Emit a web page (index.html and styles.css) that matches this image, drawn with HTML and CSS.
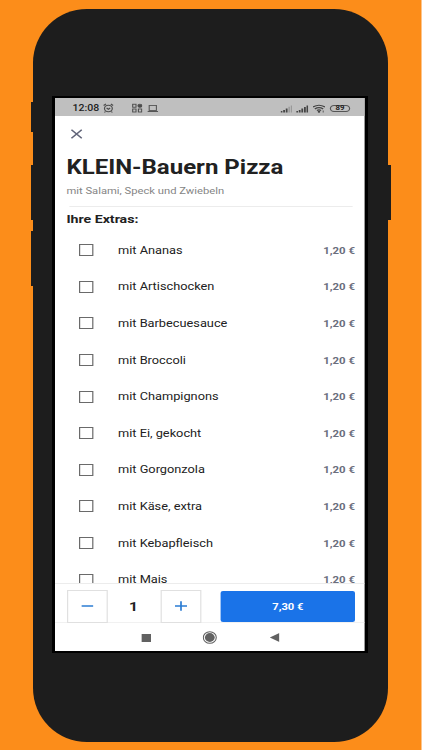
FILE: index.html
```
<!DOCTYPE html>
<html lang="de">
<head>
    <meta charset="UTF-8">
    <meta name="viewport" content="width=device-width, initial-scale=1.0">
    <title>KLEIN-Bauern Pizza</title>
    <link rel="stylesheet" href="styles.css">
</head>
<body>
    <div class="phone">
        <span class="side-key key-mute"></span>
        <span class="side-key key-up"></span>
        <span class="side-key key-down"></span>
        <span class="side-key key-power"></span>
        <div class="bezel">
            <div class="screen">
                <div class="status-bar">
                    <span class="clock">12:08</span>
                    <svg class="alarm" width="9" height="10" viewBox="0 0 18 20" fill="none" stroke="#4c4c4c" stroke-width="2">
                        <circle cx="9" cy="11" r="6.5"/>
                        <path d="M1 5l4-3M17 5l-4-3M6 10l3 2.500 3-2.500M4 17l-1.500 2M14 17l1.500 2"/>
                    </svg>
                    <svg class="apps" width="9" height="10" viewBox="0 0 18 20" fill="none" stroke="#4c4c4c" stroke-width="1.8">
                        <rect x="1.500" y="2.500" width="5.500" height="6"/>
                        <circle cx="13.500" cy="5.500" r="3.200" fill="#4c4c4c"/>
                        <rect x="1.500" y="12" width="5.500" height="6"/>
                        <rect x="11" y="12" width="5.500" height="6"/>
                    </svg>
                    <svg class="laptop" width="9" height="10" viewBox="0 0 18 20" fill="none" stroke="#555" stroke-width="1.800">
                        <rect x="3" y="5" width="12" height="10"/>
                        <path d="M0 17h18"/>
                    </svg>
                    <div class="status-right">
                        <svg width="10" height="9" viewBox="0 0 20 18" fill="#444">
                            <path d="M0 14h3v3H0zM4.300 12h3v5h-3zM8.600 9h3v8h-3z"/>
                            <path fill="#999" d="M13 5.500h2.500V17H13zM17 3h2v14h-2z"/>
                        </svg>
                        <svg class="signal" width="10" height="9" viewBox="0 0 20 18" fill="#444">
                            <path d="M0 14h3v3H0zM4.300 12h3v5h-3zM8.600 9h3v8h-3zM13 6h3v11h-3zM17.200 3H20v14h-2.800z"/>
                        </svg>
                        <svg class="wifi" width="10" height="9" viewBox="0 0 20 18" fill="none" stroke="#444" stroke-width="2.400">
                            <path d="M0 6q10-7 20 0M3 9.800q7-5 14 0M6.500 13q3.500-2.500 7 0"/>
                            <circle cx="10" cy="15.500" r="1" fill="#444"/>
                            <path stroke-width="1.500" d="M17 13v4"/>
                        </svg>
                        <span class="battery">89</span>
                    </div>
                </div>

                <div class="content">
                    <div class="close">
                        <svg width="10" height="10" viewBox="0 0 10 10" fill="none" stroke="#626579" stroke-width="1.300">
                            <path d="M.7.700l8.600 8.600M9.300.700L.7 9.300"/>
                        </svg>
                    </div>
                    <h1>KLEIN-Bauern Pizza</h1>
                    <p class="description">mit Salami, Speck und Zwiebeln</p>
                    <h2>Ihre Extras:</h2>
                    <ul class="extras">
                        <li><span class="box"></span><span class="name">mit Ananas</span><span class="price">1,20 €</span></li>
                        <li><span class="box"></span><span class="name">mit Artischocken</span><span class="price">1,20 €</span></li>
                        <li><span class="box"></span><span class="name">mit Barbecuesauce</span><span class="price">1,20 €</span></li>
                        <li><span class="box"></span><span class="name">mit Broccoli</span><span class="price">1,20 €</span></li>
                        <li><span class="box"></span><span class="name">mit Champignons</span><span class="price">1,20 €</span></li>
                        <li><span class="box"></span><span class="name">mit Ei, gekocht</span><span class="price">1,20 €</span></li>
                        <li><span class="box"></span><span class="name">mit Gorgonzola</span><span class="price">1,20 €</span></li>
                        <li><span class="box"></span><span class="name">mit Käse, extra</span><span class="price">1,20 €</span></li>
                        <li><span class="box"></span><span class="name">mit Kebapfleisch</span><span class="price">1,20 €</span></li>
                        <li><span class="box"></span><span class="name">mit Mais</span><span class="price">1,20 €</span></li>
                    </ul>
                </div>

                <div class="order-bar">
                    <button class="step">
                        <svg width="10" height="12" viewBox="0 0 10 12" stroke="#2b7cd3" stroke-width="1.400"><path d="M0 6h10"/></svg>
                    </button>
                    <span class="amount">1</span>
                    <button class="step">
                        <svg width="10" height="12" viewBox="0 0 10 12" stroke="#2b7cd3" stroke-width="1.400"><path d="M0 6h10M5 1.200v9.600"/></svg>
                    </button>
                    <button class="order">7,30 €</button>
                </div>

                <div class="nav-bar">
                    <svg width="8" height="8" viewBox="0 0 8 8"><path fill="#616161" d="M0 0h8v8H0z"/></svg>
                    <svg width="12" height="13" viewBox="0 0 12 13">
                        <ellipse cx="6" cy="6.500" rx="5.400" ry="5.800" fill="none" stroke="#616161" stroke-width=".9"/>
                        <ellipse cx="6" cy="6.500" rx="4.100" ry="4.400" fill="#616161"/>
                    </svg>
                    <svg width="8" height="9" viewBox="0 0 8 9"><path fill="#616161" d="M8 0v9L0 4.500z"/></svg>
                </div>
            </div>
        </div>
    </div>
</body>
</html>
```
FILE: styles.css
```
* {
    box-sizing: border-box;
}
body {
    margin: 0;
    height: 750px;
    padding: 8.5px 0 0 33px;
    background-color: #fc8d1a;
    border-right: 1px solid #fdc58c;
    font-family: Roboto, sans-serif;
    color: #212121;
    overflow: hidden;
}
svg {
    display: block;
    flex: none;
}

/* Phone body */
.phone {
    position: relative;
    width: 355px;
    height: 733px;
    padding: 87.5px 0 0 19px;
    border-radius: 54px;
    background-color: #1d1d1d;
}
.side-key {
    position: absolute;
    left: -2.500px;
    width: 6px;
    height: 55px;
    background-color: #1d1d1d;
}
.key-mute {
    top: 93px;
    height: 30px;
}
.key-up {
    top: 156px;
}
.key-down {
    top: 222.500px;
}
.key-power {
    top: 156px;
    left: 352px;
}
.bezel {
    width: 316px;
    height: 557px;
    padding: 2px 3px;
    background-color: #000;
}

/* The screen is laid out narrow and stretched to the phone's width */
.screen {
    display: flex;
    flex-direction: column;
    width: 258px;
    height: 552.500px;
    background-color: #fff;
    transform: scaleX(1.2);
    transform-origin: 0 0;
    overflow: hidden;
}

.status-bar {
    display: flex;
    align-items: center;
    flex: none;
    height: 18px;
    padding: 2px 12px 0 14.500px;
    background-color: #bfbfbf;
}
.clock {
    width: 22px;
    font-size: 8.800px;
    font-weight: 500;
    white-space: nowrap;
}
.alarm {
    margin-left: 3.500px;
}
.apps {
    margin-left: 15px;
}
.laptop {
    margin-left: 3.500px;
}
.status-right {
    display: flex;
    align-items: center;
    margin-left: auto;
}
.signal {
    margin-left: 3px;
}
.wifi {
    margin-left: 4px;
}
.battery {
    width: 17px;
    height: 7px;
    margin-left: 4px;
    border: 1px solid #555;
    border-radius: 4px;
    font-size: 6.500px;
    font-weight: 700;
    line-height: 5px;
    text-align: center;
}

.content {
    flex: 1;
    min-height: 0;
    padding: 0 8px 0 9.500px;
    overflow: hidden;
}
.close {
    padding: 13px 0 0 3px;
}
h1 {
    margin: 16px 0 0;
    font-size: 20px;
    font-weight: 700;
    line-height: 24px;
    white-space: nowrap;
}
.description {
    height: 28px;
    margin: 0 2px;
    border-bottom: 1px solid #ececec;
    color: #858585;
    font-size: 9.350px;
    line-height: 23px;
    text-indent: -2px;
}
h2 {
    margin: 4px 0 0;
    font-size: 11.800px;
    font-weight: 700;
    line-height: 16px;
}
.extras {
    margin: 5px 0 0;
    padding: 0;
    list-style: none;
}
.extras li {
    display: flex;
    align-items: center;
    height: 36.600px;
    padding-left: 10px;
}
.box {
    width: 12px;
    height: 12px;
    border: 1px solid #6a6a6a;
}
.name {
    margin-left: 21px;
    font-size: 10.650px;
}
.price {
    margin-left: auto;
    color: #6b6e7d;
    font-size: 9.500px;
    font-weight: 700;
}

.order-bar {
    display: flex;
    align-items: center;
    flex: none;
    height: 40px;
    padding: 7px 8px 0 9.500px;
    border-top: 1px solid #ececec;
    border-bottom: 1px solid #f1f1f1;
}
button {
    display: flex;
    align-items: center;
    justify-content: center;
    padding: 0;
    border: none;
    font-family: inherit;
    background: none;
}
.step {
    width: 34px;
    height: 33px;
    border: 1px solid #e0e0e0;
}
.amount {
    width: 44px;
    font-size: 13px;
    font-weight: 700;
    text-align: center;
}
.order {
    width: 112px;
    height: 31px;
    margin-left: auto;
    border-radius: 2px;
    background-color: #1a73e8;
    color: #fff;
    font-size: 9.300px;
    font-weight: 700;
}

.nav-bar {
    display: flex;
    align-items: center;
    justify-content: space-between;
    flex: none;
    height: 28px;
    padding: 2px 71px 0 71.500px;
}
```
